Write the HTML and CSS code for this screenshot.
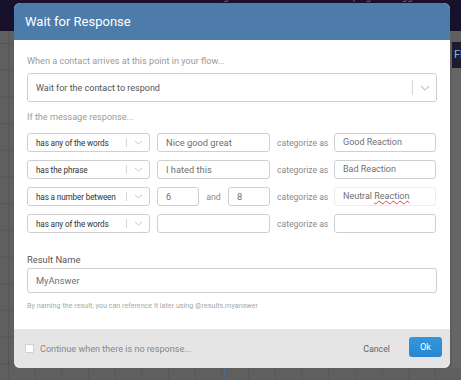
FILE: index.html
```html
<!DOCTYPE html>
<html>
<head>
<meta charset="utf-8">
<link rel="stylesheet" href="styles.css">
</head>
<body>
<div class="page">
  <div class="nav">
    <span>messages</span><span>contacts</span><span>flows</span><span>campaigns</span><span>triggers</span><span>dashboard</span>
  </div>
  <div class="canvas">
    <div class="node"><div class="node-head">Flow</div><div class="node-body"></div></div>
    <div class="connector"></div>
  </div>

  <div class="modal">
    <div class="modal-header">Wait for Response</div>
    <div class="modal-body">
      <div class="hint">When a contact arrives at this point in your flow...</div>
      <div class="select big">
        <span class="select-text">Wait for the contact to respond</span>
        <span class="sep"></span>
        <svg class="chev" width="10" height="6" viewBox="0 0 10 6"><path d="M1 1 L5 5 L9 1" fill="none" stroke="#c8c8c8" stroke-width="1.1"/></svg>
      </div>
      <div class="hint second">If the message response...</div>

      <div class="rules">
        <div class="rule">
          <div class="select small"><span class="select-text">has any of the words</span><span class="sep"></span><svg class="chev" width="9" height="5" viewBox="0 0 9 5"><path d="M1 1 L4.5 4 L8 1" fill="none" stroke="#c8c8c8" stroke-width="1"/></svg></div>
          <div class="input value">Nice good great</div>
          <span class="cat">categorize as</span>
          <div class="input category">Good Reaction</div>
        </div>
        <div class="rule">
          <div class="select small"><span class="select-text">has the phrase</span><span class="sep"></span><svg class="chev" width="9" height="5" viewBox="0 0 9 5"><path d="M1 1 L4.5 4 L8 1" fill="none" stroke="#c8c8c8" stroke-width="1"/></svg></div>
          <div class="input value">I hated this</div>
          <span class="cat">categorize as</span>
          <div class="input category">Bad Reaction</div>
        </div>
        <div class="rule">
          <div class="select small"><span class="select-text">has a number between</span><span class="sep"></span><svg class="chev" width="9" height="5" viewBox="0 0 9 5"><path d="M1 1 L4.5 4 L8 1" fill="none" stroke="#c8c8c8" stroke-width="1"/></svg></div>
          <div class="range">
            <div class="input num">6</div>
            <span class="and">and</span>
            <div class="input num">8</div>
          </div>
          <span class="cat">categorize as</span>
          <div class="input category focus">Neutral <span class="spell">Reaction</span></div>
        </div>
        <div class="rule">
          <div class="select small"><span class="select-text">has any of the words</span><span class="sep"></span><svg class="chev" width="9" height="5" viewBox="0 0 9 5"><path d="M1 1 L4.5 4 L8 1" fill="none" stroke="#c8c8c8" stroke-width="1"/></svg></div>
          <div class="input value"></div>
          <span class="cat">categorize as</span>
          <div class="input category"></div>
        </div>
      </div>

      <div class="label">Result Name</div>
      <div class="input result">MyAnswer</div>
      <div class="help">By naming the result, you can reference it later using @results.myanswer</div>
    </div>
    <div class="modal-footer">
      <label class="check"><span class="box"></span><span class="check-text">Continue when there is no response...</span></label>
      <span class="cancel">Cancel</span>
      <span class="ok">Ok</span>
    </div>
  </div>
</div>
</body>
</html>
```

FILE: styles.css
```css
* { box-sizing: border-box; }
html, body { margin: 0; padding: 0; }
body {
  width: 461px;
  height: 380px;
  overflow: hidden;
  font-family: Roboto, "Liberation Sans", sans-serif;
  background: #5e5e5e;
}
.page { position: relative; width: 461px; height: 380px; overflow: hidden; }
.nav {
  height: 31px;
  background: #17112b;
  display: flex;
  padding-left: 195px;
  gap: 12px;
  font-size: 9.5px;
  color: #6f6d7c;
  line-height: 10px;
  overflow: hidden;
}
.nav span { margin-top: -8px; white-space: nowrap; }
.canvas {
  position: relative;
  height: 349px;
  background-color: #5f5f5f;
  background-image:
    linear-gradient(to right, rgba(0,0,0,0.09) 1px, transparent 1px),
    linear-gradient(to bottom, rgba(0,0,0,0.09) 1px, transparent 1px);
  background-size: 26.7px 26.7px;
  background-position: 8px 12px;
}
.node {
  position: absolute;
  left: 452px;
  top: 11px;
  width: 9px;
  overflow: hidden;
}
.node-head {
  height: 26px;
  background: #1d1b30;
  color: #8fb3d8;
  font-size: 11px;
  line-height: 26px;
  padding-left: 2px;
  white-space: nowrap;
}
.node-body { height: 300px; background: #666; }
.connector {
  position: absolute;
  left: 224px;
  top: 336px;
  width: 1px;
  height: 20px;
  background: #4a6c8c;
}

.modal {
  position: absolute;
  left: 14px;
  top: 3px;
  width: 436px;
  border-radius: 6px;
  overflow: hidden;
  background: #fff;
}
.modal-header {
  height: 37px;
  background: #4d7cab;
  color: #fff;
  font-size: 13px;
  line-height: 38px;
  padding-left: 11px;
}
.modal-body {
  padding: 15px 13px 0 13px;
  height: 289px;
}
.hint {
  font-size: 9.1px;
  line-height: 12px;
  color: #9b9b9b;
}
.hint.second { margin-top: 9px; }
.select {
  display: flex;
  align-items: center;
  border: 1px solid #cfcfcf;
  border-radius: 3px;
  background: #fff;
}
.select.big {
  margin-top: 6px;
  height: 29px;
  padding-left: 8px;
}
.select .select-text { flex: 1; color: #555; white-space: nowrap; }
.select.big .select-text { font-size: 9px; }
.select .sep { width: 1px; background: #d6d6d6; }
.select.big .sep { height: 15px; }
.select.big .chev { margin: 0 6px 0 7px; }

.rules {
  margin-top: 10px;
  display: flex;
  flex-direction: column;
  gap: 8px;
}
.rule {
  display: flex;
  align-items: center;
  height: 19px;
}
.select.small {
  width: 123px;
  height: 19px;
  padding-left: 8px;
}
.select.small .select-text {
  font-size: 8.2px;
  color: #333;
  letter-spacing: -0.15px;
}
.select.small .sep { height: 9px; }
.select.small .chev { margin: 0 6px 0 7px; }
.input {
  border: 1px solid #cfcfcf;
  border-radius: 3px;
  height: 19px;
  font-size: 9.3px;
  color: #707070;
  line-height: 17px;
  padding-left: 8px;
  background: #fff;
  white-space: nowrap;
}
.input.value { width: 113px; margin-left: 7px; }
.range { display: flex; align-items: center; margin-left: 7px; width: 113px; }
.input.num { width: 42px; }
.and { font-size: 8.8px; color: #8a8a8a; margin: 0 auto; }
.cat {
  font-size: 8.6px;
  color: #8a8a8a;
  margin-left: 7px;
  width: 57px;
  white-space: nowrap;
}
.input.category { width: 102px; font-size: 9px; }
.input.focus { border-color: #ececec; }
.spell {
  text-decoration: underline wavy #e04040;
  text-decoration-thickness: 1px;
  text-underline-offset: 1px;
}
.label {
  margin-top: 21px;
  font-size: 9.4px;
  color: #555;
  line-height: 12px;
}
.input.result {
  margin-top: 2px;
  height: 25px;
  line-height: 23px;
  font-size: 9.3px;
  color: #707070;
}
.help {
  margin-top: 8px;
  font-size: 7.2px;
  color: #a8a8a8;
  line-height: 9px;
}
.modal-footer {
  height: 39px;
  background: #e5e5e5;
  display: flex;
  align-items: center;
  padding: 0 8px 0 11px;
}
.check { display: flex; align-items: center; flex: 1; }
.box {
  width: 9px;
  height: 9px;
  background: #fff;
  border: 1px solid #cfcfcf;
  border-radius: 1px;
}
.check-text { margin-left: 6px; font-size: 9.1px; color: #888; }
.cancel { font-size: 8.8px; color: #666; margin-right: 19px; }
.ok {
  width: 33px;
  height: 20px;
  margin-top: -3px;
  border-radius: 3px;
  background: linear-gradient(#3596dc, #2886d2);
  color: #fff;
  font-size: 9.3px;
  line-height: 20px;
  text-align: center;
}
```
